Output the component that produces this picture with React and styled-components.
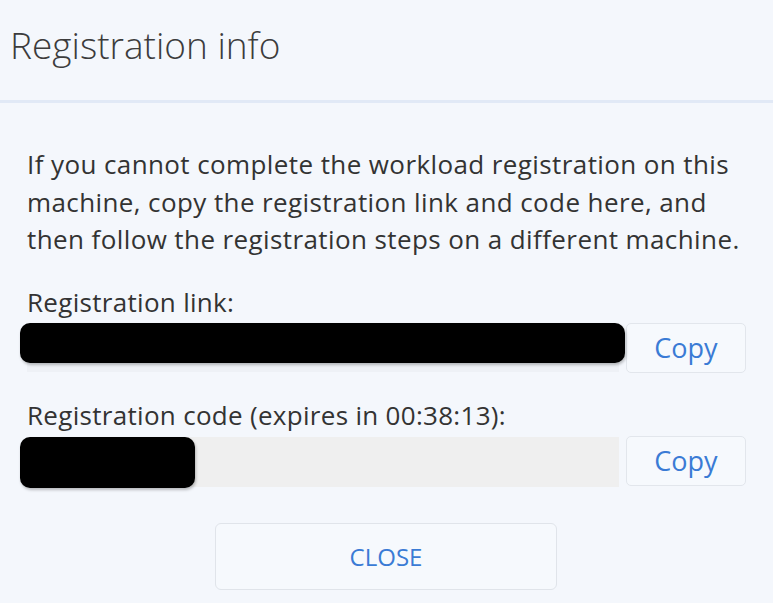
import React from "react";
import styled, { createGlobalStyle } from "styled-components";

const GlobalStyle = createGlobalStyle`
  html, body {
    margin: 0;
    padding: 0;
    background: #f4f7fc;
  }
  body {
    font-family: "Open Sans", "Noto Sans", sans-serif;
    color: #333;
  }
`;

const Dialog = styled.div`
  width: 773px;
  height: 603px;
  overflow: hidden;
  background: #f4f7fc;
`;

const Header = styled.header`
  height: 103px;
  box-sizing: border-box;
  padding: 20px 0 0 10px;
  border-bottom: 3px solid #e1e9f6;
`;

const Title = styled.h1`
  margin: 0;
  font-size: 37px;
  font-weight: 300;
  color: #3c3c3c;
  line-height: 50px;
`;

const Body = styled.div`
  padding: 43px 27px 0 27px;
  display: flex;
  flex-direction: column;
`;

const Text = styled.p`
  margin: 0;
  font-size: 26px;
  letter-spacing: 0.4px;
  line-height: 37.5px;
  color: #333;
`;

const Label = styled.div`
  font-size: 26px;
  letter-spacing: 0.3px;
  line-height: 30px;
  color: #333;
  margin-top: ${(p) => p.$top}px;
`;

const Row = styled.div`
  display: flex;
  align-items: flex-start;
  gap: 7px;
  margin-left: -7px;
  margin-top: 6px;
`;

const Field = styled.div`
  position: relative;
  flex: 1;
  height: ${(p) => p.$height}px;
  margin-top: ${(p) => p.$top}px;
  margin-left: 7px;
  background: ${(p) => p.$bg};
`;

const Redaction = styled.div`
  position: absolute;
  left: -7px;
  top: ${(p) => p.$top}px;
  width: ${(p) => p.$width};
  height: ${(p) => p.$height}px;
  background: #000;
  border-radius: 10px;
  box-shadow: 1px 2px 3px rgba(0, 0, 0, 0.25);
`;

const CopyButton = styled.button`
  width: 120px;
  height: 50px;
  flex: none;
  box-sizing: border-box;
  background: #f6f9fd;
  border: 1px solid #e2e6ec;
  border-radius: 5px;
  color: #3a7bd5;
  font-family: inherit;
  font-size: 27px;
  padding: 0;
  cursor: pointer;
`;

const Footer = styled.div`
  display: flex;
  justify-content: center;
  padding-top: 36px;
  padding-right: 1px;
`;

const CloseButton = styled.button`
  width: 342px;
  height: 67px;
  box-sizing: border-box;
  background: #f6f9fd;
  border: 1px solid #e0e4ea;
  border-radius: 6px;
  color: #3a7bd5;
  font-family: inherit;
  font-size: 24px;
  padding: 0;
  cursor: pointer;
`;

export default function App() {
  return (
    <>
      <GlobalStyle />
      <Dialog>
        <Header>
          <Title>Registration info</Title>
        </Header>
        <Body>
          <Text>
            If you cannot complete the workload registration on this machine,
            copy the registration link and code here, and then follow the
            registration steps on a different machine.
          </Text>
          <Label $top={28}>Registration link:</Label>
          <Row>
            <Field $top={1} $height={48} $bg="#eef1f6">
              <Redaction $top={-1} $width="calc(100% + 13px)" $height={40} />
            </Field>
            <CopyButton>Copy</CopyButton>
          </Row>
          <Label $top={27}>Registration code (expires in 00:38:13):</Label>
          <Row>
            <Field $top={1} $height={50} $bg="#efefef">
              <Redaction $top={0} $width="175px" $height={51} />
            </Field>
            <CopyButton>Copy</CopyButton>
          </Row>
        </Body>
        <Footer>
          <CloseButton>CLOSE</CloseButton>
        </Footer>
      </Dialog>
    </>
  );
}
